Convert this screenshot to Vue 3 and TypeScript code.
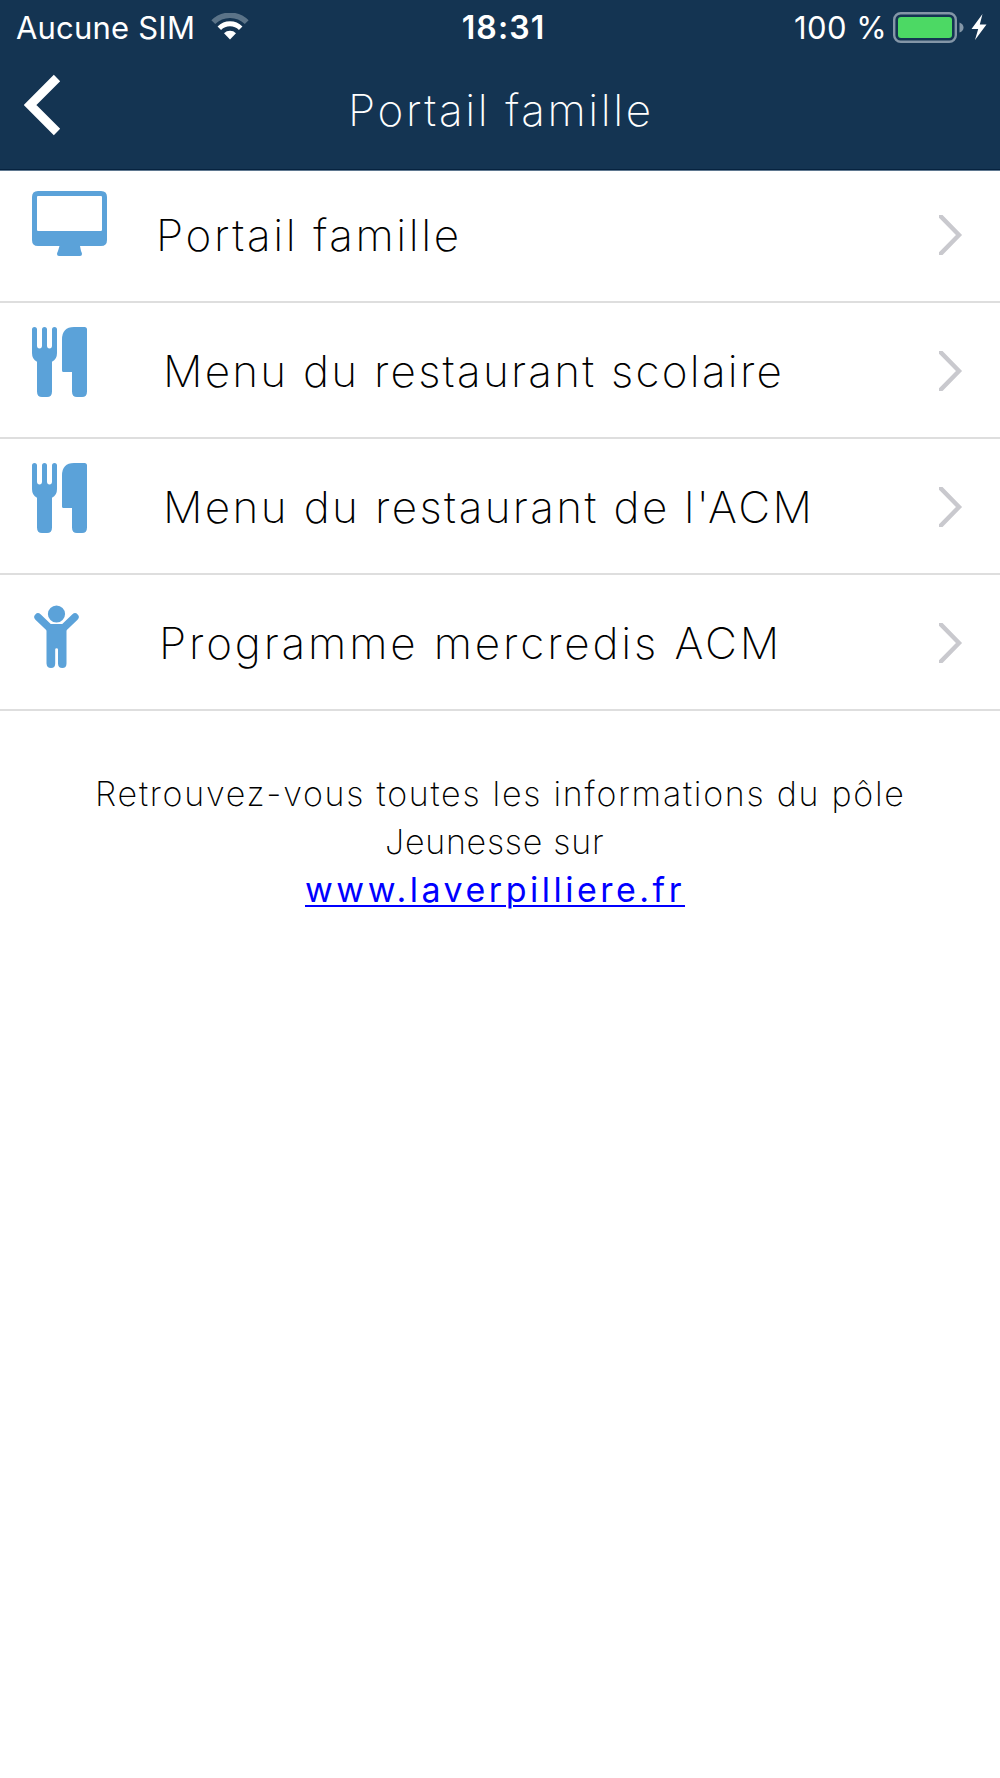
<script setup lang="ts">
interface MenuItem {
  label: string
  icon: 'screen' | 'cutlery' | 'child'
  kind: string
}

const items: MenuItem[] = [
  { label: 'Portail famille', icon: 'screen', kind: 'portal' },
  { label: 'Menu du restaurant scolaire', icon: 'cutlery', kind: 'school' },
  { label: "Menu du restaurant de l'ACM", icon: 'cutlery', kind: 'acm' },
  { label: 'Programme mercredis ACM', icon: 'child', kind: 'program' },
]
</script>

<template>
  <div class="app">
    <header class="header">
      <div class="status">
        <div class="carrier">
          <span class="carrier-name">Aucune SIM</span>
          <svg class="wifi" width="38" height="28" viewBox="0 0 38 28" fill="none">
            <path d="M2.3 9.2A23.5 23.5 0 0 1 35.7 9.2" stroke="#5b7388" stroke-width="5.4" />
            <path d="M8.3 15.2A15.2 15.2 0 0 1 29.7 15.2" stroke="#fff" stroke-width="5" />
            <path d="M13 20.3A8.6 8.6 0 0 1 25 20.3L19 26.6Z" fill="#fff" />
          </svg>
        </div>
        <span class="clock">18:31</span>
        <div class="power">
          <span class="percent">100 %</span>
          <svg class="battery" width="96" height="32" viewBox="0 0 96 32">
            <rect x="1.2" y="1.2" width="61.6" height="28.6" rx="6.5" fill="none" stroke="#8496a7" stroke-width="2.4" />
            <rect x="5" y="5" width="54" height="21" rx="3" fill="#4cd964" />
            <path d="M66.5 10.5Q70.5 12 70.5 15.5T66.5 20.5Z" fill="#8496a7" />
            <path d="M89.5 2L78.5 17H85.2L82 28L93.5 12.5H86.8Z" fill="#fff" />
          </svg>
        </div>
      </div>
      <div class="navbar">
        <svg class="back" width="38" height="62" viewBox="0 0 38 62" fill="none">
          <path d="M33 4L6 31L33 58" stroke="#fff" stroke-width="9" />
        </svg>
        <h1 class="title">Portail famille</h1>
      </div>
    </header>

    <ul class="menu">
      <li v-for="item in items" :key="item.label" class="row" :class="item.kind">
        <div class="icon">
          <svg v-if="item.icon === 'screen'" width="75" height="65" viewBox="0 0 75 65">
            <path fill="#5ba2d9" fill-rule="evenodd" d="M6 0H69Q75 0 75 6V49Q75 55 69 55H48L49 60Q50 62 50 63Q50 65 48 65H27Q25 65 25 63Q25 62 26 60L27.500 55H6Q0 55 0 49V6Q0 0 6 0ZM6 5Q5 5 5 6V38.500Q5 40 6 40H69Q70 40 70 38.500V6Q70 5 69 5Z" />
          </svg>
          <svg v-else-if="item.icon === 'cutlery'" width="56" height="71" viewBox="0 0 56 71">
            <path fill="#5ba2d9" d="M0 2.500Q0 0 2.500 0T5 2.500V18.500Q5 21.500 7.500 21.500T10 18.500V2.500Q10 0 12.500 0T15 2.500V18.500Q15 21.500 17.500 21.500T20 18.500V2.500Q20 0 22.500 0T25 2.500V26Q25 32.500 20 34.700V64.500Q20 70 15 70H10Q5 70 5 64.500V34.700Q0 32.500 0 26Z" />
            <path fill="#5ba2d9" d="M42 0H52.500Q55 0 55 2.500V64.500Q55 70 50 70H45Q40 70 40 64.500V45H31.500Q30 45 30 43.500V12.500Q30 0 42 0Z" />
          </svg>
          <svg v-else width="46" height="64" viewBox="0 0 46 64">
            <circle cx="22.500" cy="9" r="8.600" fill="#5ba2d9" />
            <path d="M4 12L15.500 23H29.500L41 12" fill="none" stroke="#5ba2d9" stroke-width="7.400" stroke-linecap="round" />
            <path fill="#5ba2d9" d="M12.500 19H32.500V58.500Q32.500 63 28.300 63T24 58.500V44.500Q24 43.200 22.600 43.200T21.200 44.500V58.500Q21.200 63 17 63T12.500 58.500Z" />
          </svg>
        </div>
        <span class="label">{{ item.label }}</span>
        <svg class="chevron" width="26" height="40" viewBox="0 0 26 40" fill="none">
          <path d="M-1 -1.500L20 20L-1 41.500" stroke="#c9c9ce" stroke-width="4.400" />
        </svg>
      </li>
    </ul>

    <div class="note">
      <div class="line intro">Retrouvez-vous toutes les informations du pôle</div>
      <div class="line subject">Jeunesse sur</div>
      <a class="line link" href="#">www.laverpilliere.fr</a>
    </div>
  </div>
</template>

<style>
body {
  margin: 0;
  background: #fff;
}
</style>

<style scoped>
.app {
  width: 1000px;
  min-height: 1778px;
  background: #fff;
  font-family: Inter, "Liberation Sans", sans-serif;
  font-weight: 200;
  color: #000;
}
.header {
  box-sizing: border-box;
  height: 171px;
  background: #143452;
  color: #fff;
  border-bottom: 1px solid #5f7890;
  box-shadow: inset 0 -1px #06223f;
}
.status {
  display: grid;
  grid-template-columns: 1fr auto 1fr;
  height: 56px;
  line-height: 56px;
  font-size: 31px;
  font-weight: 400;
}
.carrier {
  display: flex;
  padding-left: 16px;
}
.carrier-name {
  width: 195px;
  letter-spacing: 0.2px;
  white-space: nowrap;
}
.wifi {
  margin-top: 13px;
}
.clock {
  padding-left: 7px;
  font-size: 32px;
  font-weight: 600;
  letter-spacing: 1.1px;
}
.power {
  display: flex;
  justify-content: flex-end;
  padding-right: 11px;
}
.percent {
  margin-right: 6px;
  letter-spacing: 0.4px;
  white-space: nowrap;
}
.battery {
  flex: none;
  margin-top: 12px;
}
.navbar {
  display: flex;
  align-items: flex-start;
}
.back {
  margin: 18px 0 0 24px;
}
.title {
  margin: 26px 0 0 286px;
  font-size: 44px;
  line-height: 56px;
  font-weight: 200;
  letter-spacing: 2.6px;
  white-space: nowrap;
}
.menu {
  margin: 0;
  padding: 0;
  list-style: none;
}
.row {
  box-sizing: border-box;
  display: flex;
  height: 136px;
  border-bottom: 2px solid #dedede;
}
.portal {
  height: 132px;
}
.icon {
  box-sizing: border-box;
  flex: none;
  width: 156px;
  padding: 24px 0 0 32px;
}
.portal .icon {
  padding-top: 20px;
}
.program .icon {
  padding: 30px 0 0 34px;
}
.label {
  flex: 1;
  padding-top: 40px;
  padding-left: 7px;
  font-size: 44px;
  line-height: 56px;
  white-space: nowrap;
}
.portal .label {
  padding-top: 36px;
  padding-left: 0;
  letter-spacing: 2.6px;
}
.school .label {
  letter-spacing: 2.25px;
}
.acm .label {
  letter-spacing: 2.38px;
}
.program .label {
  padding-left: 3px;
  letter-spacing: 2.85px;
}
.chevron {
  flex: none;
  margin: 48px 35px 0 0;
}
.portal .chevron {
  margin-top: 44px;
}
.note {
  display: flex;
  flex-direction: column;
  align-items: flex-start;
  padding-top: 59px;
  font-size: 34px;
  line-height: 48px;
  white-space: nowrap;
}
.intro {
  margin-left: 95px;
  letter-spacing: 1.73px;
}
.subject {
  margin-left: 385px;
  letter-spacing: 0.75px;
}
.link {
  margin-left: 305px;
  font-weight: 400;
  letter-spacing: 3.5px;
  color: #00f;
  text-decoration: underline;
  text-decoration-thickness: 2px;
  text-underline-offset: 3px;
}
</style>
